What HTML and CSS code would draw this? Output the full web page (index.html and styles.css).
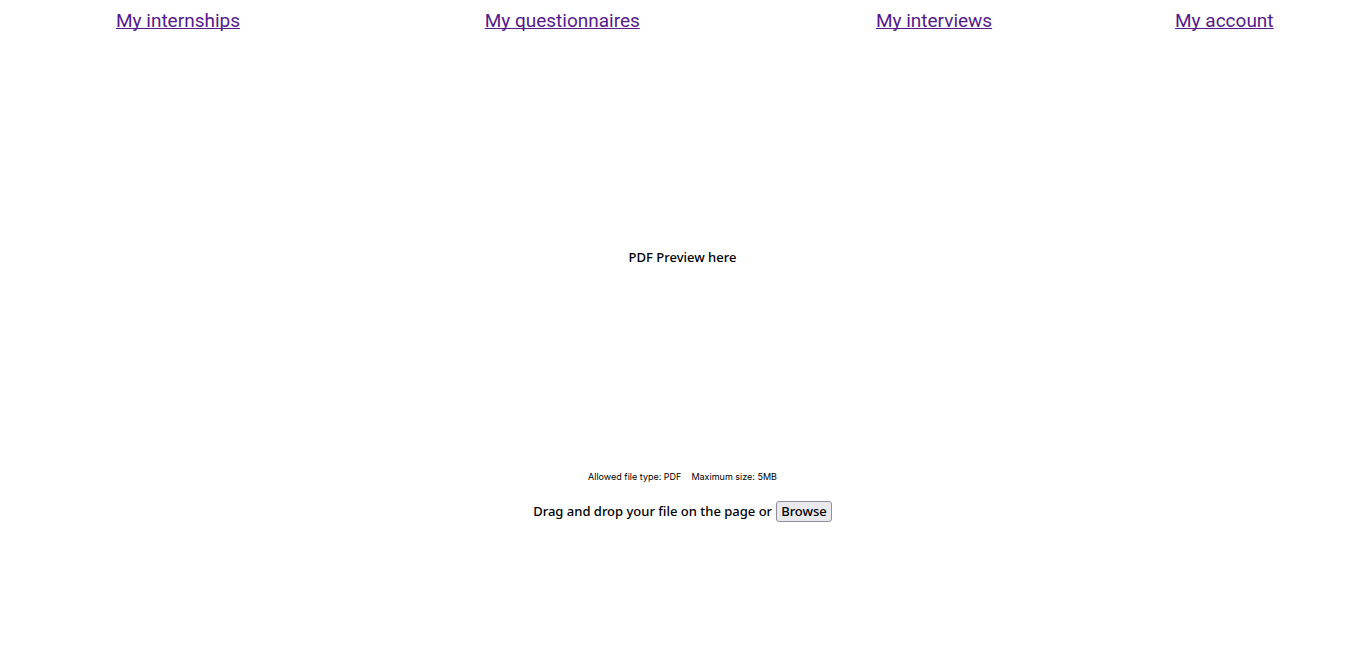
FILE: index.html
```html
<!DOCTYPE html>
<html lang="en">
<head>
  <meta charset="utf-8">
  <meta name="viewport" content="width=device-width, initial-scale=1">
  <title>My account</title>
  <link rel="stylesheet" href="styles.css">
</head>
<body class="page">
  <nav>
    <ul class="menu">
      <li class="menu-item"><a class="menu-link" href="#internships">My internships</a></li>
      <li class="menu-item"><a class="menu-link" href="#questionnaires">My questionnaires</a></li>
      <li class="menu-item"><a class="menu-link" href="#interviews">My interviews</a></li>
      <li class="menu-item"><a class="menu-link" href="#account">My account</a></li>
    </ul>
  </nav>
  <main class="upload">
    <div class="preview">PDF Preview here</div>
    <div class="limits"><span>Allowed file type: PDF</span><span>Maximum size: 5MB</span></div>
    <div class="picker">
      <span>Drag and drop your file on the page or</span>
      <button class="browse" type="button">Browse</button>
    </div>
  </main>
</body>
</html>
```
FILE: styles.css
```css
.page {
  margin: 8px;
  background: #fff;
  color: #000;
  font-family: "Noto Sans", "Liberation Sans", sans-serif;
  font-size: 13px;
  font-weight: 500;
  line-height: 20px;
}

.menu {
  display: grid;
  grid-template-columns: 123fr 155fr 114fr 96fr;
  margin: 0;
  padding: 0;
  list-style: none;
}

.menu-item {
  text-align: center;
  font-family: Roboto, "Liberation Sans", sans-serif;
  font-size: 19px;
  font-weight: 400;
  line-height: 26px;
}

.menu-link {
  color: #551a8b;
  text-decoration: underline 1px #551a8b;
  text-underline-offset: 1px;
  text-decoration-skip-ink: none;
}

.upload {
  display: flex;
  flex-direction: column;
  align-items: center;
  padding-top: 14px;
}

.preview {
  display: flex;
  align-items: center;
  min-height: 418px;
}

.limits {
  display: flex;
  gap: 10px;
  font-family: Inter, "Liberation Sans", sans-serif;
  font-size: 9px;
  font-weight: 400;
  line-height: 22px;
}

.picker {
  display: flex;
  align-items: baseline;
  gap: 4px;
  padding-top: 13px;
}

.browse {
  padding: 0 4px;
  border: 1px solid #8f8f9d;
  border-radius: 3px;
  background: #e9e9ed;
  color: #000;
  font: inherit;
  line-height: 19px;
}
```
